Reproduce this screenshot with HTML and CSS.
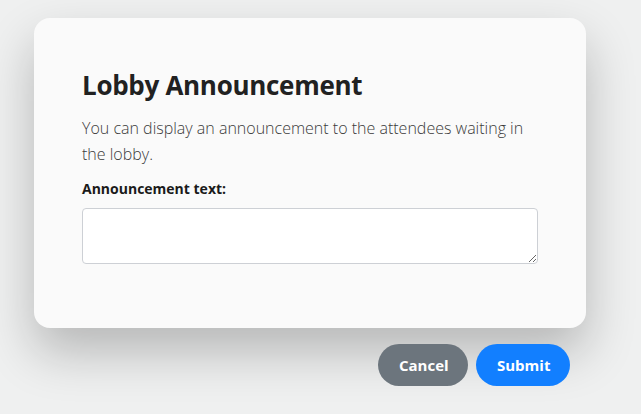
FILE: index.html
```html
<!DOCTYPE html>
<html>
<head>
<meta charset="utf-8">
<link rel="stylesheet" href="styles.css">
</head>
<body>
<div class="wrap">
  <div class="card">
    <h1 class="title">Lobby Announcement</h1>
    <p class="desc">You can display an announcement to the attendees waiting in the lobby.</p>
    <label class="label" for="ann">Announcement text:</label>
    <textarea id="ann" class="input"></textarea>
  </div>
  <div class="actions">
    <button class="btn btn-cancel">Cancel</button>
    <button class="btn btn-submit">Submit</button>
  </div>
</div>
</body>
</html>
```
FILE: styles.css
```css
html, body {
  margin: 0;
  padding: 0;
  background: #eff0f0;
  font-family: "Open Sans", "Noto Sans", sans-serif;
  width: 641px;
  height: 414px;
  overflow: hidden;
}
.wrap {
  width: 552px;
  margin: 18px 0 0 34px;
}
.card {
  box-sizing: border-box;
  height: 310px;
  background: #fafafa;
  border-radius: 16px;
  padding: 49px 48px 0 48px;
  box-shadow: 0 24px 50px rgba(0, 0, 0, 0.24);
  display: flex;
  flex-direction: column;
}
.title {
  margin: 0;
  font-size: 26px;
  font-weight: 700;
  color: #212121;
  line-height: 36px;
  letter-spacing: -0.3px;
}
.desc {
  margin: 12px 0 0 0;
  padding-right: 12px;
  font-size: 16px;
  font-weight: 300;
  color: #3a3a3a;
  line-height: 26px;
}
.label {
  margin-top: 12px;
  font-size: 14px;
  font-weight: 700;
  color: #1a1a1a;
  line-height: 20px;
}
.input {
  box-sizing: border-box;
  margin-top: 9px;
  width: 456px;
  height: 56px;
  border: 1px solid #cdd0d5;
  border-radius: 4px;
  background: #fff;
  resize: vertical;
}
.actions {
  display: flex;
  justify-content: flex-end;
  gap: 8px;
  padding-right: 16px;
  margin-top: 16px;
}
.btn {
  height: 42px;
  border: none;
  border-radius: 21px;
  font-family: "Open Sans", "Noto Sans", sans-serif;
  font-size: 15px;
  font-weight: 700;
  color: #fff;
  padding: 0 21px;
}
.btn-cancel {
  background: #6c757d;
  width: 90px;
}
.btn-submit {
  background: #127fff;
  width: 94px;
}
```
